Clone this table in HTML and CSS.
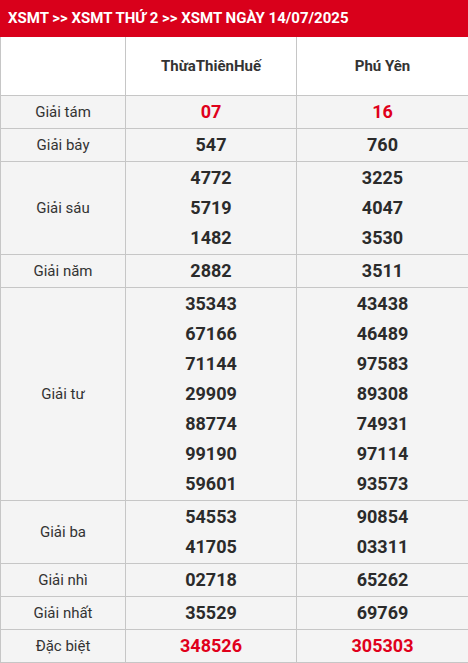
FILE: index.html
```html
<!DOCTYPE html>
<html lang="vi">
<head>
<meta charset="utf-8">
<link rel="stylesheet" href="styles.css">
</head>
<body>
<div class="title">XSMT &gt;&gt; XSMT THỨ 2 &gt;&gt; XSMT NGÀY 14/07/2025</div>
<table class="kq">
<colgroup><col class="c0"><col class="c1"><col class="c2"></colgroup>
<thead>
<tr><th></th><th>ThừaThiênHuế</th><th>Phú Yên</th></tr>
</thead>
<tbody>
<tr><td class="lbl">Giải tám</td><td><div class="n red">07</div></td><td><div class="n red">16</div></td></tr>
<tr><td class="lbl">Giải bảy</td><td><div class="n">547</div></td><td><div class="n">760</div></td></tr>
<tr><td class="lbl">Giải sáu</td><td><div class="n">4772</div><div class="n">5719</div><div class="n">1482</div></td><td><div class="n">3225</div><div class="n">4047</div><div class="n">3530</div></td></tr>
<tr><td class="lbl">Giải năm</td><td><div class="n">2882</div></td><td><div class="n">3511</div></td></tr>
<tr><td class="lbl">Giải tư</td><td><div class="n">35343</div><div class="n">67166</div><div class="n">71144</div><div class="n">29909</div><div class="n">88774</div><div class="n">99190</div><div class="n">59601</div></td><td><div class="n">43438</div><div class="n">46489</div><div class="n">97583</div><div class="n">89308</div><div class="n">74931</div><div class="n">97114</div><div class="n">93573</div></td></tr>
<tr><td class="lbl">Giải ba</td><td><div class="n">54553</div><div class="n">41705</div></td><td><div class="n">90854</div><div class="n">03311</div></td></tr>
<tr><td class="lbl">Giải nhì</td><td><div class="n">02718</div></td><td><div class="n">65262</div></td></tr>
<tr><td class="lbl">Giải nhất</td><td><div class="n">35529</div></td><td><div class="n">69769</div></td></tr>
<tr><td class="lbl">Đặc biệt</td><td><div class="n red">348526</div></td><td><div class="n red">305303</div></td></tr>
</tbody>
</table>
</body>
</html>
```
FILE: styles.css
```css
html, body {
  margin: 0;
  padding: 0;
  background: #ffffff;
}
body {
  font-family: Roboto, "Liberation Sans", Arial, sans-serif;
  color: #333333;
  width: 468px;
}
.title {
  background: #d9001b;
  color: #ffffff;
  font-weight: 700;
  font-size: 15px;
  height: 37px;
  line-height: 36px;
  padding-left: 8px;
  box-sizing: border-box;
}
.kq {
  width: 468px;
  border-collapse: collapse;
  table-layout: fixed;
  background: #f4f4f4;
}
.c0 { width: 125px; }
.c1 { width: 171px; }
.c2 { width: 172px; }
.kq th, .kq td {
  border: 1px solid #c6c6c6;
  padding: 1px 0;
  text-align: center;
  vertical-align: middle;
}
.kq thead th {
  background: #ffffff;
  height: 58px;
  padding: 0;
  font-size: 15px;
  font-weight: 700;
  color: #333333;
  border-top: none;
}
.lbl {
  font-size: 15px;
  color: #333333;
}
.n {
  height: 30px;
  line-height: 30px;
  font-size: 18px;
  font-weight: 700;
  color: #2b2b2b;
}
.n.red {
  color: #e0001b;
}
```
